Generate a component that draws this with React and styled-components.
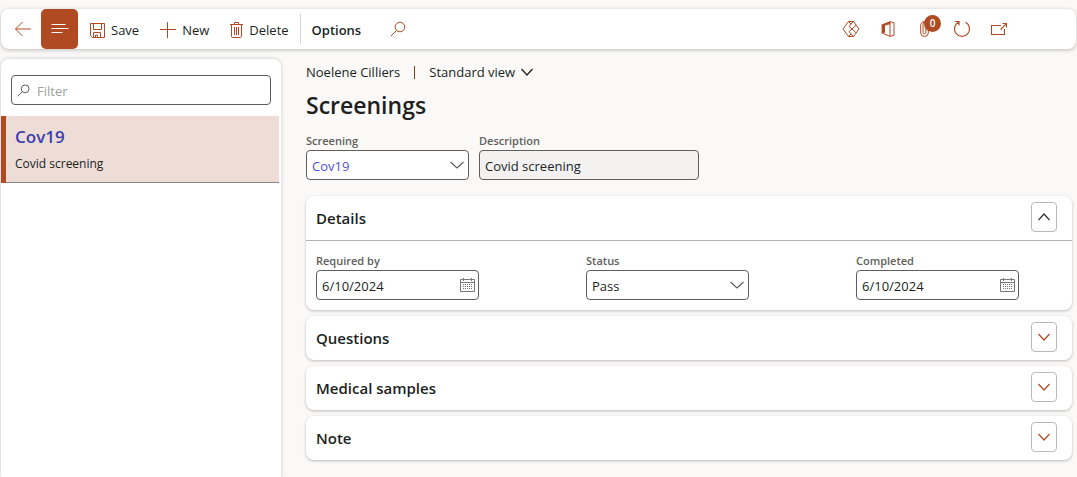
import React, { useState } from "react";
import styled, { createGlobalStyle } from "styled-components";

const Global = createGlobalStyle`
  * { box-sizing: border-box; }
  body {
    margin: 0;
    background: #faf9f8;
    color: #201f1e;
    font: 13px/20px "Open Sans", "Noto Sans", sans-serif;
  }
  button, input, select { font: inherit; color: inherit; margin: 0; }
`;

const accent = "#b04a22";

const Page = styled.div`
  display: flex;
  flex-direction: column;
  gap: 10px;
  min-height: 100vh;
  padding: 9px 1px 0;
`;

const Toolbar = styled.header`
  display: flex;
  align-items: stretch;
  gap: 1px;
  height: 40px;
  padding-right: 59px;
  background: #fff;
  border-radius: 8px;
  box-shadow: 0 1px 4px rgba(0, 0, 0, 0.25);
`;

const IconButton = styled.button`
  position: relative;
  display: flex;
  align-items: center;
  justify-content: center;
  width: ${(p) => p.$width || 37}px;
  padding: 0;
  border: 0;
  border-radius: 5px;
  background: ${(p) => (p.$active ? accent : "transparent")};
  color: ${(p) => (p.$active ? "#fff" : accent)};
`;

const Navigation = styled.nav`
  display: flex;
  padding-left: 3px;
  margin-right: 1px;
`;

const Command = styled.button`
  display: flex;
  align-items: center;
  gap: 6px;
  padding: 2px 10px 0;
  border: 0;
  background: transparent;
  font-weight: ${(p) => (p.$strong ? 600 : 400)};
  white-space: nowrap;
  svg { color: ${accent}; }
`;

const Divider = styled.span`
  width: 1px;
  margin: 5px 0;
  background: #d6d4d2;
`;

const Tools = styled.div`
  display: flex;
  margin-left: auto;
`;

const Badge = styled.span`
  position: absolute;
  top: 6px;
  left: 18px;
  width: 17px;
  height: 17px;
  border-radius: 50%;
  background: ${accent};
  color: #fff;
  font-size: 10px;
  font-weight: 600;
  line-height: 17px;
  text-align: center;
`;

const Body = styled.div`
  display: flex;
  flex: 1;
`;

const Sidebar = styled.aside`
  flex: none;
  width: 280px;
  background: #fff;
  border-radius: 8px 8px 0 0;
  box-shadow: 0 0 4px rgba(0, 0, 0, 0.2);
`;

const FilterBox = styled.label`
  display: flex;
  align-items: center;
  gap: 7px;
  height: 30px;
  margin: 16px 10px 11px;
  padding: 0 5px;
  border: 1px solid #605e5c;
  border-radius: 4px;
  color: #605e5c;
  input {
    flex: 1;
    min-width: 0;
    padding: 2px 0 0;
    border: 0;
    outline: 0;
    background: transparent;
  }
  input::placeholder { color: #a19f9d; opacity: 1; }
`;

const List = styled.ul`
  margin: 0;
  padding: 0 2px 0 0;
  list-style: none;
`;

const ListItem = styled.li`
  padding: 9px 9px 9px;
  border-left: 5px solid ${accent};
  box-shadow: inset 0 -1px #8a8886;
  background: #eedcd6;
  font-size: 12px;
`;

const ItemLink = styled.a`
  display: block;
  margin-bottom: 5px;
  color: #3b3fb0;
  font-size: 17px;
  font-weight: 600;
  line-height: 24px;
  text-decoration: none;
`;

const Main = styled.main`
  flex: 1;
  min-width: 0;
  padding: 3px 4px 16px 25px;
`;

const Crumbs = styled.div`
  display: flex;
  align-items: center;
  gap: 14px;
`;

const Bar = styled.span`
  width: 1px;
  height: 13px;
  background: #8a3a1a;
`;

const ViewButton = styled.button`
  display: flex;
  align-items: center;
  gap: 6px;
  padding: 0;
  border: 0;
  background: transparent;
`;

const Title = styled.h1`
  margin: 7px 0 12px;
  font-size: 23px;
  font-weight: 600;
  line-height: 32px;
`;

const HeaderFields = styled.div`
  display: flex;
  gap: 10px;
  margin-bottom: 16px;
`;

const FieldBox = styled.div`
  display: flex;
  flex-direction: column;
  gap: 1px;
  width: ${(p) => p.$width || 163}px;
`;

const Label = styled.label`
  color: #605e5c;
  font-size: 11px;
  font-weight: 600;
  line-height: 16px;
`;

const Control = styled.div`
  display: grid;
  align-items: center;
  height: 30px;
  border: 1px solid #605e5c;
  border-radius: 4px;
  background: ${(p) => (p.$readOnly ? "#f3f2f1" : "#fff")};
  color: ${(p) => (p.$link ? "#4f52d9" : "inherit")};
  > * { grid-area: 1 / 1; }
  > svg { justify-self: end; margin-right: 4px; color: #605e5c; pointer-events: none; }
  input, select {
    appearance: none;
    width: 100%;
    height: 28px;
    padding: 2px 5px 0;
    border: 0;
    outline: 0;
    background: transparent;
  }
`;

const PickerButton = styled.button`
  justify-self: end;
  display: flex;
  margin-right: 3px;
  padding: 0;
  border: 0;
  background: transparent;
  color: #797775;
`;

const Cards = styled.div`
  display: flex;
  flex-direction: column;
  gap: 6px;
`;

const Card = styled.section`
  background: #fff;
  border-radius: 8px;
  box-shadow: 0 1px 3px rgba(0, 0, 0, 0.25);
`;

const CardHeader = styled.div`
  display: flex;
  align-items: center;
  justify-content: space-between;
  height: 44px;
  padding: 0 15px 2px 10px;
`;

const CardTitle = styled.h2`
  margin: 0;
  padding-top: 2px;
  font-size: 15px;
  font-weight: 600;
  line-height: 24px;
`;

const Toggle = styled.button`
  display: flex;
  align-items: center;
  justify-content: center;
  width: 26px;
  height: 30px;
  padding: 0;
  border: 1px solid #bab8b7;
  border-radius: 4px;
  background: #fff;
  color: ${(p) => (p.$open ? "#323130" : accent)};
`;

const CardBody = styled.div`
  display: flex;
  flex-wrap: wrap;
  justify-content: space-between;
  gap: 12px;
  padding: 12px 53px 10px 10px;
  border-top: 1px solid #b3b1af;
`;

const Svg = ({ w = 16, h = 16, children }) => (
  <svg width={w} height={h} viewBox={`0 0 ${w} ${h}`} fill="none" stroke="currentColor" strokeWidth="1" aria-hidden="true">
    {children}
  </svg>
);

const BackIcon = () => <Svg><path d="M.5 8H16M7.5 1 .5 8l7 7" /></Svg>;
const MenuIcon = () => <Svg w={18} h={12}><path d="M.5 1.5h14M.5 5.5h17M.5 9.5h11" strokeWidth="1.2" /></Svg>;
const SaveIcon = () => (
  <Svg w={15} h={15}>
    <path d="M.5.5h14v14H2.5l-2-2zM3.5.5v6h8v-6M3.5 14.5v-5h7v5M5.5 14.5v-2.5h2v2.5" />
  </Svg>
);
const PlusIcon = () => <Svg><path d="M7.5 0v16M0 7.5h16" /></Svg>;
const TrashIcon = () => (
  <Svg w={13} h={16}>
    <path d="M0 2.5h13M4.5 2.5v-2h4v2M1.5 2.5v12q0 1 1 1h8q1 0 1-1v-12M4.5 5v8M6.5 5v8M8.5 5v8" />
  </Svg>
);
const SearchIcon = ({ size = 16 }) => (
  <svg width={size} height={size} viewBox="0 0 16 16" fill="none" stroke="currentColor" strokeWidth={16 / size} aria-hidden="true">
    <circle cx="10" cy="6" r="4.8" />
    <path d="M6.5 9.5.8 15.2" />
  </svg>
);
const DiamondIcon = () => (
  <Svg w={18} h={18}>
    <path d="M6.5 1.5h5L17 9l-5.5 7.5h-5L1 9zM11.5 1.5 7 6.4l7.2 6.4M11.5 16.5 7 11.6l7.2-6.4M6.5 1.5l2.6 2.6M6.5 16.5l2.6-2.6" />
  </Svg>
);
const OfficeIcon = () => (
  <Svg w={14} h={16}>
    <path d="M9 .6v14.8l4-1.2V1.8zM2 12.4l7 3" />
    <path d="m9 .2-8.4 3.2v9.4L4 11.4V4.6l5-1.4z" fill="currentColor" stroke="none" />
  </Svg>
);
const ClipIcon = () => (
  <Svg w={9} h={16}>
    <path d="M.7 4v8a3.7 3.4 0 0 0 7.6 0V3.2a2.6 2.6 0 0 0-5.2 0V11.5a1.4 1.4 0 0 0 2.8 0V4M.7 4a3.6 3.4 0 0 1 5.2-3" />
  </Svg>
);
const RefreshIcon = () => (
  <Svg w={18} h={18}><path d="M5.4 2.2a7.5 7.5 0 1 0 7.2 0M2 1.5h4v4" strokeWidth="1.2" /></Svg>
);
const PopoutIcon = () => (
  <Svg w={16} h={13}><path d="M10 2.5H.5v9h13V6M9.5 6.5l5.5-5.5M11.5.5h4v4" strokeWidth="1.1" /></Svg>
);
const Chevron = ({ w = 14, up }) => (
  <Svg w={w} h={8}>
    <path d={up ? `M.5 7 ${w / 2} 1l${w / 2 - 0.5} 6` : `M.5 1 ${w / 2} 7l${w / 2 - 0.5}-6`} strokeWidth="1.2" />
  </Svg>
);
const CalendarIcon = () => (
  <Svg w={15} h={14}>
    <path d="M.5 1.5h14v12H.5zM.5 4.5h14M3.5 0v3M11.5 0v3" />
    <path d="M3 6.5h9M3 8.5h9M3 10.5h9" strokeDasharray="1 1" />
  </Svg>
);

const SelectField = ({ id, label, value, link }) => (
  <FieldBox>
    <Label htmlFor={id}>{label}</Label>
    <Control $link={link}>
      <select id={id} defaultValue={value}><option>{value}</option></select>
      <Chevron />
    </Control>
  </FieldBox>
);

const DateField = ({ id, label, value }) => (
  <FieldBox>
    <Label htmlFor={id}>{label}</Label>
    <Control>
      <input id={id} defaultValue={value} />
      <PickerButton aria-label={`Choose date: ${label}`}><CalendarIcon /></PickerButton>
    </Control>
  </FieldBox>
);

const Section = ({ title, initiallyOpen = false, children }) => {
  const [open, setOpen] = useState(initiallyOpen);
  return (
    <Card>
      <CardHeader>
        <CardTitle>{title}</CardTitle>
        <Toggle $open={open} aria-label={title} aria-expanded={open} onClick={() => setOpen(!open)}>
          <Chevron w={12} up={open} />
        </Toggle>
      </CardHeader>
      {open && children && <CardBody>{children}</CardBody>}
    </Card>
  );
};

export default function App() {
  return (
    <>
      <Global />
      <Page>
        <Toolbar>
          <Navigation>
            <IconButton aria-label="Back"><BackIcon /></IconButton>
            <IconButton $active aria-label="Show list"><MenuIcon /></IconButton>
          </Navigation>
          <Command><SaveIcon />Save</Command>
          <Command><PlusIcon />New</Command>
          <Command><TrashIcon />Delete</Command>
          <Divider />
          <Command $strong>Options</Command>
          <IconButton $width={52} aria-label="Search"><SearchIcon /></IconButton>
          <Tools>
            <IconButton aria-label="Apps"><DiamondIcon /></IconButton>
            <IconButton aria-label="Open in Office"><OfficeIcon /></IconButton>
            <IconButton aria-label="Attachments"><ClipIcon /><Badge>0</Badge></IconButton>
            <IconButton aria-label="Refresh"><RefreshIcon /></IconButton>
            <IconButton aria-label="Open in new window"><PopoutIcon /></IconButton>
          </Tools>
        </Toolbar>
        <Body>
          <Sidebar>
            <FilterBox>
              <SearchIcon size={13} />
              <input placeholder="Filter" aria-label="Filter" />
            </FilterBox>
            <List>
              <ListItem>
                <ItemLink href="#cov19">Cov19</ItemLink>
                Covid screening
              </ListItem>
            </List>
          </Sidebar>
          <Main>
            <Crumbs>
              <span>Noelene Cilliers</span>
              <Bar />
              <ViewButton>Standard view<Chevron w={12} /></ViewButton>
            </Crumbs>
            <Title>Screenings</Title>
            <HeaderFields>
              <SelectField id="screening" label="Screening" value="Cov19" link />
              <FieldBox $width={220}>
                <Label htmlFor="description">Description</Label>
                <Control $readOnly><input id="description" readOnly value="Covid screening" /></Control>
              </FieldBox>
            </HeaderFields>
            <Cards>
              <Section title="Details" initiallyOpen>
                <DateField id="required" label="Required by" value="6/10/2024" />
                <SelectField id="status" label="Status" value="Pass" />
                <DateField id="completed" label="Completed" value="6/10/2024" />
              </Section>
              <Section title="Questions" />
              <Section title="Medical samples" />
              <Section title="Note" />
            </Cards>
          </Main>
        </Body>
      </Page>
    </>
  );
}
